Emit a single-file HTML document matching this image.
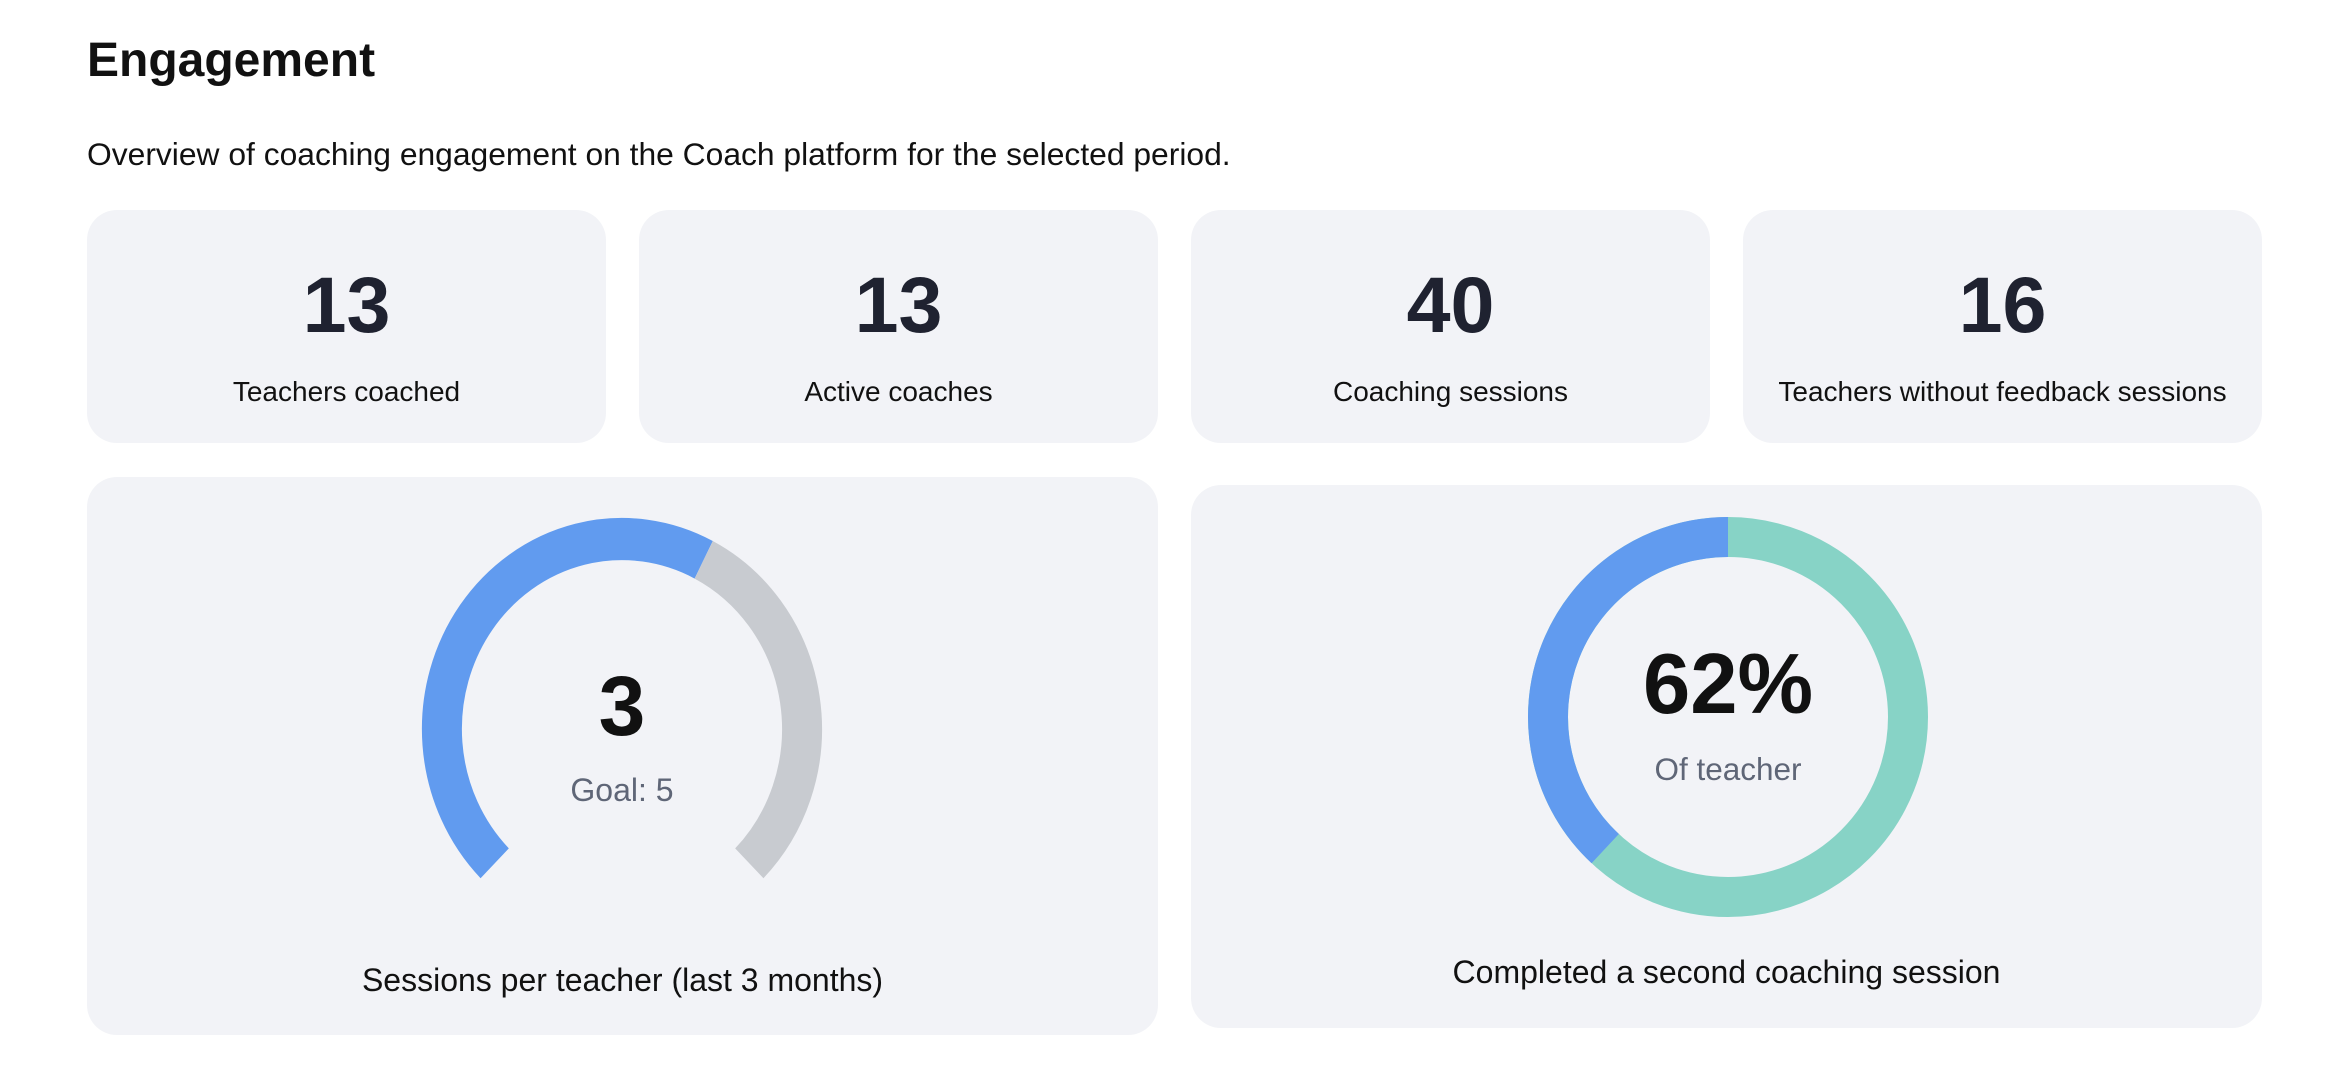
<!DOCTYPE html>
<html><head><meta charset="utf-8"><style>
*{margin:0;padding:0;box-sizing:border-box}
body{width:2350px;height:1076px;background:#fff;font-family:"Liberation Sans",Helvetica,Arial,sans-serif;position:relative;overflow:hidden;color:#111}
.a{position:absolute}
h1{position:absolute;left:87px;top:33px;font-size:48px;font-weight:bold;color:#111;line-height:56px}
.sub{left:87px;top:136px;font-size:31.8px;line-height:36px;color:#111}
.card{position:absolute;background:#f2f3f7;border-radius:30px}
.num{position:absolute;left:0;right:0;text-align:center;font-size:79px;font-weight:bold;color:#1f2230;line-height:90px}
.lbl{position:absolute;left:0;right:0;text-align:center;font-size:28px;color:#111;line-height:32px}
.c{text-align:center}
</style></head><body>
<h1>Engagement</h1>
<div class="a sub">Overview of coaching engagement on the Coach platform for the selected period.</div>

<div class="card" style="left:87px;top:210px;width:519px;height:233px"><div class="num" style="top:50px">13</div><div class="lbl" style="top:166px">Teachers coached</div></div>
<div class="card" style="left:639px;top:210px;width:519px;height:233px"><div class="num" style="top:50px">13</div><div class="lbl" style="top:166px">Active coaches</div></div>
<div class="card" style="left:1191px;top:210px;width:519px;height:233px"><div class="num" style="top:50px">40</div><div class="lbl" style="top:166px">Coaching sessions</div></div>
<div class="card" style="left:1743px;top:210px;width:519px;height:233px"><div class="num" style="top:50px">16</div><div class="lbl" style="top:166px">Teachers without feedback sessions</div></div>

<div class="card" style="left:87px;top:477px;width:1071px;height:558px"></div>
<div class="card" style="left:1191px;top:485px;width:1071px;height:543px"></div>

<svg class="a" style="left:0;top:0" width="2350" height="1076">
<g transform="translate(622,729) scale(1,1.055)">
<path d="M-127.3 127.3 A180 180 0 0 1 81.7 -160.4" fill="none" stroke="#619bef" stroke-width="40"/>
<path d="M81.7 -160.4 A180 180 0 0 1 127.3 127.3" fill="none" stroke="#c8cbd0" stroke-width="40"/>
</g>
<circle cx="1728" cy="717" r="180" fill="none" stroke="#87d3c6" stroke-width="40"/>
<path d="M1605.2 848.6 A180 180 0 0 1 1728 537" fill="none" stroke="#619bef" stroke-width="40"/>
</svg>

<div class="a c" style="left:422px;width:400px;top:659px;font-size:84px;font-weight:bold;line-height:94px;color:#111">3</div>
<div class="a c" style="left:422px;width:400px;top:772px;font-size:32px;line-height:36px;color:#5f6677">Goal: 5</div>
<div class="a c" style="left:87px;width:1071px;top:962px;font-size:32px;line-height:36px;color:#111">Sessions per teacher (last 3 months)</div>

<div class="a c" style="left:1528px;width:400px;top:638px;font-size:85px;font-weight:bold;line-height:94px;color:#111">62%</div>
<div class="a c" style="left:1528px;width:400px;top:751px;font-size:31.5px;line-height:36px;color:#5f6677">Of teacher</div>
<div class="a c" style="left:1191px;width:1071px;top:954px;font-size:32px;line-height:36px;color:#111">Completed a second coaching session</div>
</body></html>
